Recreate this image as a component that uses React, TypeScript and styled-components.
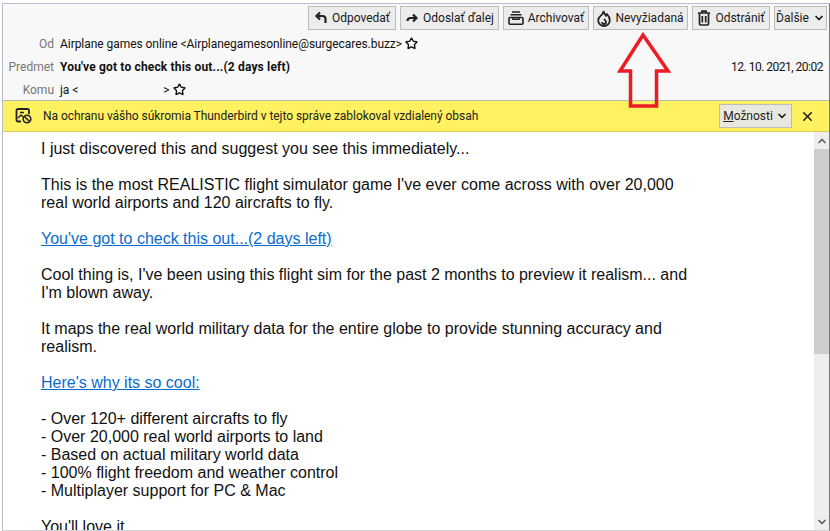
import React from 'react'
import styled, { createGlobalStyle } from 'styled-components'
import { ChevronDown, ChevronUp, Star, X } from 'lucide-react'

const GlobalStyle = createGlobalStyle`
  html, body {
    margin: 0;
    padding: 0;
    background: #fff;
    overflow: hidden;
  }
`

const Window = styled.div`
  position: relative;
  box-sizing: border-box;
  width: 830px;
  height: 531px;
  padding-top: 3px;
  padding-left: 2px;
  overflow: hidden;
  background: #fff;
  display: flex;
  flex-direction: column;
`

const Inner = styled.div`
  flex: 1;
  min-height: 0;
  display: flex;
  flex-direction: column;
  border-top: 1px solid #b4bfce;
  border-left: 1px solid #b4bfce;
  border-right: 1px solid #77787a;
  border-bottom: 1px solid #d4d4d4;
`

const Header = styled.div`
  height: 96px;
  box-sizing: border-box;
  background: #f8f8f8;
  font: 12px/16px Roboto, "Open Sans", sans-serif;
  color: #111;
  padding-top: 2px;
`

const Toolbar = styled.div`
  display: flex;
  justify-content: flex-end;
  gap: 4px;
  padding-right: 2px;
  height: 24px;
`

const ToolButton = styled.div<{ $width: number }>`
  box-sizing: border-box;
  width: ${p => p.$width}px;
  height: 24px;
  display: flex;
  align-items: center;
  justify-content: center;
  gap: 4px;
  background: #ececec;
  border: 1px solid #bcbcbc;
  color: #1a1a1a;
  white-space: nowrap;

  svg {
    flex: none;
  }
`

const Rows = styled.div`
  padding-top: 2px;
`

const Row = styled.div`
  height: 23px;
  display: flex;
  align-items: center;
  gap: 6px;
`

const Label = styled.div`
  width: 51px;
  text-align: right;
  color: #767676;
  white-space: nowrap;
`

const Value = styled.div<{ $bold?: boolean }>`
  display: flex;
  align-items: center;
  font-weight: ${p => (p.$bold ? 700 : 400)};
  letter-spacing: ${p => (p.$bold ? '0.16px' : '-0.05px')};
  white-space: nowrap;
`

const StarIcon = styled(Star)`
  margin-left: 3px;
  color: #111;
`

const HiddenAddress = styled.span<{ $width: number }>`
  display: inline-block;
  width: ${p => p.$width}px;
`

const DateText = styled.div`
  margin-left: auto;
  padding-right: 6px;
  letter-spacing: -0.5px;
`

const Notice = styled.div`
  box-sizing: border-box;
  height: 32px;
  display: flex;
  align-items: center;
  background: #fff160;
  border-top: 1px solid #b9b9b9;
  border-bottom: 1px solid #d8cb55;
  padding: 0 14px 0 12px;
  font: 12px/16px Roboto, "Open Sans", sans-serif;
  color: #222;
`

const NoticeText = styled.div`
  margin-left: 10px;
  flex: 1;
  white-space: nowrap;
  letter-spacing: -0.04px;
`

const OptionsButton = styled.div`
  box-sizing: border-box;
  width: 73px;
  height: 24px;
  display: flex;
  align-items: center;
  justify-content: center;
  gap: 3px;
  background: #e8e8e0;
  border: 1px solid #bcbcbc;
  margin-right: 8px;
`

const BodyArea = styled.div`
  flex: 1;
  min-height: 0;
  display: flex;
`

const MessageBody = styled.div`
  flex: 1;
  min-width: 0;
  overflow: hidden;
  padding: 8px 0 0 38px;
  font: 16px/18px "Liberation Sans", Arial, sans-serif;
  color: #111;
`

const Paragraph = styled.p`
  margin: 0 0 18px;
  width: 655px;
`

const MailLink = styled.a`
  color: #0a6bcd;
  text-decoration: underline;
`

const Scrollbar = styled.div`
  width: 15px;
  flex: none;
  display: flex;
  flex-direction: column;
  align-items: center;
  background: #eeeeee;
  color: #606060;
`

const ScrollArrow = styled.div`
  height: 17px;
  display: flex;
  align-items: center;
  justify-content: center;
`

const ScrollThumb = styled.div`
  width: 100%;
  height: 205px;
  background: #cdcdcd;
`

const ScrollTrack = styled.div`
  flex: 1;
`

const Annotation = styled.svg`
  position: absolute;
  left: 615px;
  top: 30px;
`

const ReplyIcon = () => (
  <svg width="14" height="14" viewBox="0 0 14 14" fill="none" stroke="#222" strokeWidth="2.2">
    <path d="M6 1.500 2.500 5 6 8.500" />
    <path d="M3 5h5.500a3 3 0 0 1 3 3v4" />
  </svg>
)

const ForwardIcon = () => (
  <svg width="14" height="14" viewBox="0 0 14 14" fill="none" stroke="#222" strokeWidth="2.2">
    <path d="M8 3.500 11.500 7 8 10.500" />
    <path d="M11 7H5.500A3 3 0 0 0 2.500 10" />
  </svg>
)

const ArchiveIcon = () => (
  <svg width="16" height="14" viewBox="0 0 16 14" fill="none" stroke="#222" strokeWidth="1.6">
    <path d="M4 1h8M2.500 3.800h11" />
    <rect x="1" y="6.500" width="14" height="6.700" rx="1" />
    <path d="M5 6.500v1.700h6V6.500" />
  </svg>
)

const FlameIcon = () => (
  <svg width="14" height="17" viewBox="0 0 14 17" fill="none" stroke="#222" strokeWidth="1.8">
    <path d="M6.500 1C7 3.500 8 4.500 9 5.700L10 4.200C11.800 6 12.800 8 12.800 10.200A5.800 5.800 0 0 1 1.200 10.200C1.200 7.600 3.500 6 4.700 4.800 5.700 3.800 6.500 2.500 6.500 1Z" />
    <path d="M7 9c1 1 2 1.800 2 3a2 2 0 0 1-4 0" />
  </svg>
)

const TrashIcon = () => (
  <svg width="14" height="16" viewBox="0 0 14 16" fill="none" stroke="#222" strokeWidth="1.7">
    <path d="M1 3h12M5 3V1.200h4V3" />
    <path d="M2.500 3.500v10.200c0 .8.500 1.300 1.300 1.300h6.400c.8 0 1.300-.5 1.300-1.300V3.500" />
    <path d="M5.300 6v6.500M8.700 6v6.500" />
  </svg>
)

const BlockedContentIcon = () => (
  <svg width="18" height="16" viewBox="0 0 18 16" fill="none" stroke="#222">
    <path d="M6 13.500H3a1.500 1.500 0 0 1-1.500-1.500V2.500A1.500 1.500 0 0 1 3 1h9.500A1.500 1.500 0 0 1 14 2.500V6" strokeWidth="1.800" />
    <path d="M3 10 6 7l2 2M5 4.500h4" strokeWidth="1.300" />
    <circle cx="12" cy="11" r="3.800" strokeWidth="1.600" />
    <path d="M9.500 8.500l5 5" strokeWidth="1.600" />
  </svg>
)

const buttons = [
  { label: 'Odpovedať', width: 88, icon: <ReplyIcon /> },
  { label: 'Odoslať ďalej', width: 99, icon: <ForwardIcon /> },
  { label: 'Archivovať', width: 86, icon: <ArchiveIcon /> },
  { label: 'Nevyžiadaná', width: 95, icon: <FlameIcon /> },
  { label: 'Odstrániť', width: 78, icon: <TrashIcon /> },
]

export default function App() {
  return (
    <Window>
      <GlobalStyle />
      <Inner>
        <Header>
          <Toolbar>
            {buttons.map(b => (
              <ToolButton key={b.label} $width={b.width}>
                {b.icon}
                {b.label}
              </ToolButton>
            ))}
            <ToolButton $width={53}>
              Ďalšie
              <ChevronDown size={12} strokeWidth={3.5} />
            </ToolButton>
          </Toolbar>
          <Rows>
            <Row>
              <Label>Od</Label>
              <Value>
                Airplane games online &lt;Airplanegamesonline@surgecares.buzz&gt;
                <StarIcon size={13} strokeWidth={2.6} />
              </Value>
            </Row>
            <Row>
              <Label>Predmet</Label>
              <Value $bold>You've got to check this out...(2 days left)</Value>
              <DateText>12. 10. 2021, 20:02</DateText>
            </Row>
            <Row>
              <Label>Komu</Label>
              <Value>
                ja &lt;
                <HiddenAddress $width={85} />
                &gt;
                <StarIcon size={13} strokeWidth={2.6} />
              </Value>
            </Row>
          </Rows>
        </Header>
        <Notice>
          <BlockedContentIcon />
          <NoticeText>Na ochranu vášho súkromia Thunderbird v tejto správe zablokoval vzdialený obsah</NoticeText>
          <OptionsButton>
            <span>
              <u>M</u>ožnosti
            </span>
            <ChevronDown size={12} strokeWidth={3.5} />
          </OptionsButton>
          <X size={15} strokeWidth={2.6} />
        </Notice>
        <BodyArea>
          <MessageBody>
            <Paragraph>I just discovered this and suggest you see this immediately...</Paragraph>
            <Paragraph>
              This is the most REALISTIC flight simulator game I've ever come across with over 20,000 real world airports and 120 aircrafts to fly.
            </Paragraph>
            <Paragraph>
              <MailLink href="#">You've got to check this out...(2 days left)</MailLink>
            </Paragraph>
            <Paragraph>
              Cool thing is, I've been using this flight sim for the past 2 months to preview it realism... and I'm blown away.
            </Paragraph>
            <Paragraph>
              It maps the real world military data for the entire globe to provide stunning accuracy and realism.
            </Paragraph>
            <Paragraph>
              <MailLink href="#">Here's why its so cool:</MailLink>
            </Paragraph>
            <Paragraph>
              - Over 120+ different aircrafts to fly
              <br />
              - Over 20,000 real world airports to land
              <br />
              - Based on actual military world data
              <br />
              - 100% flight freedom and weather control
              <br />
              - Multiplayer support for PC &amp; Mac
            </Paragraph>
            <Paragraph>You'll love it.</Paragraph>
          </MessageBody>
          <Scrollbar>
            <ScrollArrow>
              <ChevronUp size={12} strokeWidth={3.5} />
            </ScrollArrow>
            <ScrollThumb />
            <ScrollTrack />
            <ScrollArrow>
              <ChevronDown size={12} strokeWidth={3.5} />
            </ScrollArrow>
          </Scrollbar>
        </BodyArea>
      </Inner>
      <Annotation width="60" height="82" viewBox="0 0 60 82">
        <path d="M28 5 5 41H15.500V76H41.500V41H53Z" fill="none" stroke="#ed1c24" strokeWidth="3.5" />
      </Annotation>
    </Window>
  )
}
